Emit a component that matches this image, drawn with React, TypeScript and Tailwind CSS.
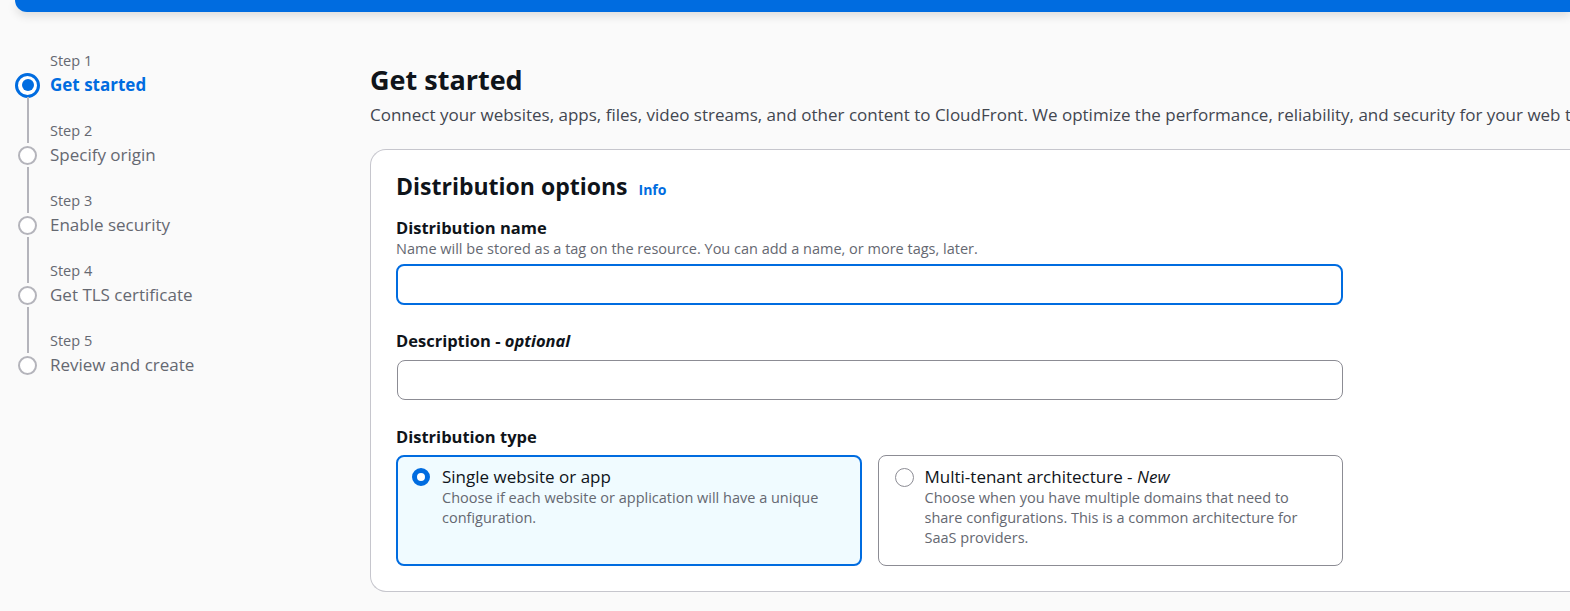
const steps = [
  { label: "Step 1", title: "Get started" },
  { label: "Step 2", title: "Specify origin" },
  { label: "Step 3", title: "Enable security" },
  { label: "Step 4", title: "Get TLS certificate" },
  { label: "Step 5", title: "Review and create" },
];

function Stepper() {
  return (
    <nav className="w-[370px] shrink-0 pl-[15px] pt-[39px]">
      {steps.map((step, i) => {
        const active = i === 0;
        const last = i === steps.length - 1;
        return (
          <div key={step.label} className="flex">
            <div className="flex w-[25px] flex-col items-center">
              <div className="flex h-[22px] justify-center">
                {i > 0 && <div className="h-full w-[2px] bg-[#b4b4bb]" />}
              </div>
              <div className="flex h-[24px] items-center justify-center">
                {active ? (
                  <div className="flex h-[25px] w-[25px] items-center justify-center rounded-full border-[3px] border-[#006ce0] bg-white">
                    <div className="h-[12px] w-[12px] rounded-full bg-[#006ce0]" />
                  </div>
                ) : (
                  <div className="h-[19px] w-[19px] rounded-full border-2 border-[#b4b4bb] bg-white" />
                )}
              </div>
              {!last && <div className="h-[24px] w-[2px] bg-[#b4b4bb]" />}
            </div>
            <div className="ml-[10px]">
              <div className="h-[22px] text-[14.5px] leading-[20px] text-[#656871]">{step.label}</div>
              <div
                className={
                  active
                    ? "text-[17px] font-bold leading-[24px] text-[#006ce0]"
                    : "text-[17px] leading-[24px] text-[#656871]"
                }
              >
                {step.title}
              </div>
              {!last && <div className="h-[24px]" />}
            </div>
          </div>
        );
      })}
    </nav>
  );
}

function Tile({
  selected,
  title,
  children,
}: {
  selected?: boolean;
  title: React.ReactNode;
  children: React.ReactNode;
}) {
  return (
    <div
      className={
        selected
          ? "flex h-[111px] rounded-[8px] border-2 border-[#006ce0] bg-[#f0fbff] pl-[14px] pr-[14px] pt-[9px]"
          : "flex h-[111px] rounded-[8px] border border-[#8c8c94] bg-white pl-[16px] pr-[15px] pt-[10px]"
      }
    >
      <div className="flex h-[22px] items-center">
        {selected ? (
          <div className="h-[18px] w-[18px] rounded-full border-[5px] border-[#006ce0] bg-white" />
        ) : (
          <div className="h-[19px] w-[19px] rounded-full border-[1.5px] border-[#8c8c94] bg-white" />
        )}
      </div>
      <div className={selected ? "ml-[12px]" : "ml-[11px]"}>
        <div className="text-[17px] leading-[22px] text-[#0f141a]">{title}</div>
        <div className="text-[14.5px] leading-[20px] text-[#656871]">{children}</div>
      </div>
    </div>
  );
}

export default function App() {
  return (
    <div className="relative h-[611px] w-full overflow-hidden bg-[#fafafa] font-['Open_Sans','Noto_Sans',sans-serif] text-[#0f141a]">
      <div className="ml-[15px] h-[12px] rounded-bl-[14px] bg-[#006ce0] shadow-[0_4px_10px_rgba(0,0,0,0.12)]" />
      <div className="flex">
        <Stepper />
        <main className="min-w-0 pt-[50px]">
          <h1 className="text-[27px] font-bold leading-[36px] text-[#0f141a]">Get started</h1>
          <p className="mt-[5px] whitespace-nowrap text-[17px] leading-[24px] text-[#424650]">
            Connect your websites, apps, files, video streams, and other content to CloudFront. We optimize the
            performance, reliability, and security for your web traffic.
          </p>
          <section className="mt-[22px] w-[1400px] rounded-l-[16px] border-y border-l border-[#c6c6cd] bg-white pb-[25px] pl-[25px] pt-[21px]">
            <div className="w-[947px]">
              <div className="flex items-baseline">
                <h2 className="text-[23px] font-bold leading-[30px]">Distribution options</h2>
                <span className="ml-[11px] text-[14px] font-bold text-[#006ce0]">Info</span>
              </div>

              <div className="mt-[16px] text-[16.5px] font-bold leading-[22px]">Distribution name</div>
              <div className="text-[14.5px] leading-[20px] text-[#656871]">
                Name will be stored as a tag on the resource. You can add a name, or more tags, later.
              </div>
              <div className="mt-[5px] h-[41px] rounded-[8px] border-2 border-[#006ce0] bg-white" />

              <div className="mt-[25px] text-[16.5px] font-bold leading-[22px]">
                Description - <span className="italic">optional</span>
              </div>
              <div className="ml-[1px] mt-[8px] h-[40px] rounded-[8px] border border-[#8c8c94] bg-white" />

              <div className="mt-[26px] text-[16.5px] font-bold leading-[22px]">Distribution type</div>
              <div className="mt-[7px] grid grid-cols-2 gap-[16px]">
                <Tile selected title="Single website or app">
                  Choose if each website or application will have a unique configuration.
                </Tile>
                <Tile
                  title={
                    <>
                      Multi-tenant architecture - <span className="italic">New</span>
                    </>
                  }
                >
                  Choose when you have multiple domains that need to share configurations. This is a common
                  architecture for SaaS providers.
                </Tile>
              </div>
            </div>
          </section>
        </main>
      </div>
    </div>
  );
}
